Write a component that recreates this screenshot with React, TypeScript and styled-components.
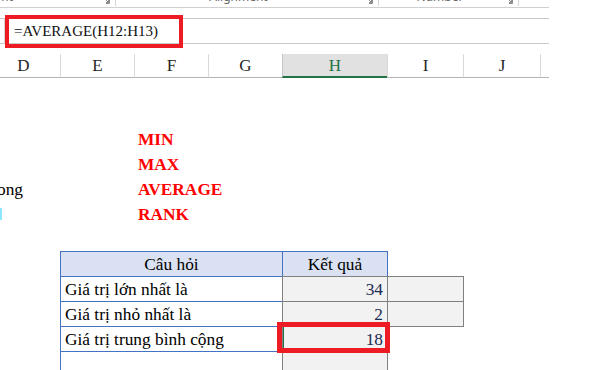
import React from 'react'
import styled, { createGlobalStyle, css } from 'styled-components'

const GlobalStyle = createGlobalStyle`
  html, body {
    margin: 0;
    padding: 0;
    background: #fff;
  }
  body {
    font-family: 'Liberation Serif', 'Times New Roman', serif;
  }
`

const COLUMNS = '74px 74px 74px 74px 105px 76px 77px 1fr'

const Page = styled.div`
  position: relative;
  width: 589px;
  height: 370px;
  overflow: hidden;
  background: #fff;
`

const Workbook = styled.div`
  width: 549px;
  height: 370px;
  overflow: hidden;
`

const RibbonStrip = styled.div`
  display: flex;
  height: 7px;
  border-bottom: 1px solid #d0d0d0;
  overflow: hidden;
`

const RibbonGroup = styled.div<{ $width: number; $offset?: number }>`
  display: flex;
  flex: none;
  box-sizing: border-box;
  width: ${({ $width }) => $width}px;
  margin-left: ${({ $offset }) => $offset ?? 0}px;
  height: 6px;
  border-right: 1px solid #d6d6d6;
`

const GroupLabel = styled.span`
  flex: 1;
  text-align: center;
  font-family: 'Noto Sans', 'Liberation Sans', sans-serif;
  font-size: 12px;
  line-height: 12px;
  margin-top: -9px;
  color: #666;
  white-space: nowrap;
`

const Launcher = styled.span`
  flex: none;
  width: 17px;
  display: flex;
  justify-content: center;
  align-items: flex-start;

  svg {
    margin-top: -3px;
  }
`

const FormulaBar = styled.div`
  display: flex;
  margin-top: 10px;
  height: 24px;
  border-top: 1px solid #c8c8c8;
  border-bottom: 1px solid #c8c8c8;
`

const FormulaInput = styled.div`
  flex: 1;
  margin-left: 4px;
  padding-left: 9px;
  border-left: 1px solid #d4d4d4;
  font-size: 15px;
  line-height: 24px;
  color: #111;
  white-space: nowrap;
`

const Sheet = styled.div`
  margin-top: 10px;
  margin-left: -14px;
  width: 563px;
`

const HeaderRow = styled.div`
  display: grid;
  grid-template-columns: ${COLUMNS};
  height: 23px;
`

const ColHeader = styled.div<{ $selected?: boolean }>`
  box-sizing: border-box;
  border-left: 1px solid #d9d9d9;
  border-bottom: 1px solid #b4b4b4;
  padding-top: 2px;
  text-align: center;
  font-size: 17px;
  line-height: 20px;
  color: #262626;

  ${({ $selected }) =>
    $selected &&
    css`
      background: #e1e1e1;
      border-left-color: #c4c4c4;
      border-bottom: 2px solid #217346;
      color: #217346;
    `}
`

const Grid = styled.div`
  display: grid;
  grid-template-columns: ${COLUMNS};
  grid-auto-rows: 25px;
  margin-top: -1px;
`

const Cell = styled.div<{ $col: number; $row: number; $span?: number }>`
  grid-column: ${({ $col, $span }) => `${$col} / span ${$span ?? 1}`};
  grid-row: ${({ $row }) => $row};
  display: flex;
  align-items: flex-end;
  box-sizing: border-box;
  padding: 0 4px 1px;
  font-size: 17.33px;
  line-height: 20px;
  color: #000;
  white-space: nowrap;
  min-width: 0;
`

const FunctionName = styled(Cell)`
  color: #ff0000;
  font-weight: 700;
  overflow: visible;
`

const SpillText = styled(Cell)`
  padding-left: 14px;
  overflow: hidden;

  span {
    margin-left: -3px;
  }
`

const LinkMark = styled.span`
  display: block;
  width: 2px;
  height: 12px;
  margin: 0 0 5px 10px;
  background: #8fe6ff;
`

type Tone = 'head' | 'label' | 'value'

const TableCell = styled(Cell)<{ $tone: Tone; $align?: 'left' | 'center' | 'right'; $selected?: boolean }>`
  margin: 0 -1px -1px 0;
  justify-content: ${({ $align }) =>
    $align === 'center' ? 'center' : $align === 'right' ? 'flex-end' : 'flex-start'};
  border: 1px solid #4472c4;
  background: #fff;

  ${({ $tone }) =>
    $tone === 'head' &&
    css`
      background: #d9e1f2;
    `}

  ${({ $tone }) =>
    $tone === 'value' &&
    css`
      background: #f2f2f2;
      border-color: #808080;
      color: #1c2b54;
    `}

  ${({ $selected }) =>
    $selected &&
    css`
      box-shadow: inset 1px 0 0 #217346;
    `}
`

const Callout = styled.div<{ $x: number; $y: number; $w: number; $h: number; $t: number }>`
  position: absolute;
  left: ${({ $x }) => $x}px;
  top: ${({ $y }) => $y}px;
  width: ${({ $w }) => $w}px;
  height: ${({ $h }) => $h}px;
  box-sizing: border-box;
  border: ${({ $t }) => $t}px solid #ed1c24;
  pointer-events: none;
`

const LauncherIcon = () => (
  <svg width="7" height="7" viewBox="0 0 7 7">
    <path d="M0.5 3 V0.5 H3" stroke="#8a8a8a" fill="none" />
    <path d="M6.5 3 V6.5 H3" stroke="#8a8a8a" fill="none" />
    <path d="M2 2 L5.5 5.5 M5.5 3 V5.5 H3" stroke="#8a8a8a" fill="none" />
  </svg>
)

const groups = [
  { label: 'Font', width: 213, offset: -97 },
  { label: 'Alignment', width: 263 },
  { label: 'Number', width: 140 },
]

const columns = ['D', 'E', 'F', 'G', 'H', 'I', 'J', '']

const functions = ['MIN', 'MAX', 'AVERAGE', 'RANK']

const results = [
  { question: 'Giá trị lớn nhất là', value: '34', extra: true },
  { question: 'Giá trị nhỏ nhất là', value: '2', extra: true },
  { question: 'Giá trị trung bình cộng', value: '18', selected: true },
  { question: '', value: '' },
]

export default function App() {
  return (
    <Page>
      <GlobalStyle />
      <Workbook>
        <RibbonStrip>
          {groups.map((g) => (
            <RibbonGroup key={g.label} $width={g.width} $offset={g.offset}>
              <GroupLabel>{g.label}</GroupLabel>
              <Launcher>
                <LauncherIcon />
              </Launcher>
            </RibbonGroup>
          ))}
        </RibbonStrip>

        <FormulaBar>
          <FormulaInput>=AVERAGE(H12:H13)</FormulaInput>
        </FormulaBar>

        <Sheet>
          <HeaderRow>
            {columns.map((c, i) => (
              <ColHeader key={i} $selected={c === 'H'}>
                {c}
              </ColHeader>
            ))}
          </HeaderRow>

          <Grid>
            {functions.map((f, i) => (
              <FunctionName key={f} $col={3} $row={3 + i}>
                {f}
              </FunctionName>
            ))}
            <SpillText $col={1} $row={5}>
              <span>ong</span>
            </SpillText>
            <Cell $col={1} $row={6}>
              <LinkMark />
            </Cell>

            <TableCell $tone="head" $col={2} $span={3} $row={8} $align="center">
              Câu hỏi
            </TableCell>
            <TableCell $tone="head" $col={5} $row={8} $align="center">
              Kết quả
            </TableCell>

            {results.map((r, i) => (
              <React.Fragment key={i}>
                <TableCell $tone="label" $col={2} $span={3} $row={9 + i}>
                  {r.question}
                </TableCell>
                <TableCell $tone="value" $col={5} $row={9 + i} $align="right" $selected={r.selected}>
                  {r.value}
                </TableCell>
                {r.extra && <TableCell $tone="value" $col={6} $row={9 + i} />}
              </React.Fragment>
            ))}
          </Grid>
        </Sheet>
      </Workbook>

      <Callout $x={5} $y={15} $w={178} $h={33} $t={4} />
      <Callout $x={277} $y={322} $w={113} $h={31} $t={5} />
    </Page>
  )
}
